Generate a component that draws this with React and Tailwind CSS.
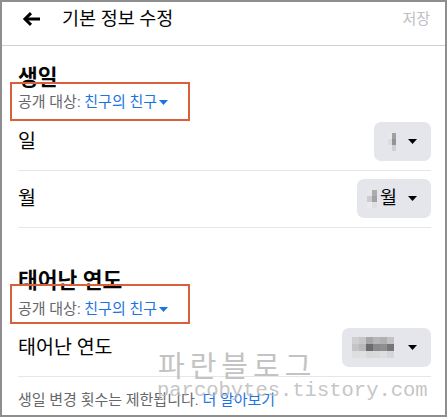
import React from 'react';

const font = { fontFamily: "Roboto, 'Noto Sans CJK KR', sans-serif" };

function Caret({ className = '', w = 9, h = 5 }) {
  return (
    <svg width={w} height={h} viewBox="0 0 10 6" className={className} preserveAspectRatio="none">
      <path d="M0 0h10L5 6z" fill="currentColor" />
    </svg>
  );
}

// 흐리게 처리된 값 (모자이크)
function Mosaic({ cells, cellClass }) {
  return (
    <div className="flex flex-col">
      {cells.map((row, i) => (
        <div key={i} className="flex">
          {row.map((c, j) => (
            <div key={j} className={`${cellClass} ${c}`} />
          ))}
        </div>
      ))}
    </div>
  );
}

const dayCells = [
  ['bg-[#e9e9eb]', 'bg-[#a0a0a2]'],
  ['bg-[#dcdcde]', 'bg-[#939395]'],
  ['bg-[#e6e6e8]', 'bg-[#cfcfd1]'],
];
const monthCells = [
  ['bg-[#e8e8ea]', 'bg-[#acacae]'],
  ['bg-[#cdcdcf]', 'bg-[#a2a2a4]'],
  ['bg-[#eaeaec]', 'bg-[#dedee0]'],
];
const yearCells = [
  ['bg-[#d0d0d2]', 'bg-[#c6c6c8]', 'bg-[#a6a6a8]', 'bg-[#b6b6b8]', 'bg-[#b0b0b2]', 'bg-[#c2c2c4]'],
  ['bg-[#c4c4c6]', 'bg-[#b8b8ba]', 'bg-[#6c6c6e]', 'bg-[#8a8a8c]', 'bg-[#8e8e90]', 'bg-[#767678]'],
  ['bg-[#dedee0]', 'bg-[#e0e0e2]', 'bg-[#d8d8da]', 'bg-[#dadadc]', 'bg-[#dedee0]', 'bg-[#d6d6d8]'],
];

function Privacy({ boxClass, className = '' }) {
  return (
    <div className={`relative flex h-[20px] items-center text-[15px] leading-[20px] ${className}`}>
      <span className="text-[#65676b]">공개 대상:&nbsp;</span>
      <span className="text-[#1b74e4]">친구의 친구</span>
      <Caret className="ml-[2px] text-[#1b74e4]" w={9} h={5} />
      {/* 주석용 빨간 박스 */}
      <div className={`pointer-events-none absolute left-[-8px] w-[180px] border-2 border-[#d9603b] ${boxClass}`} />
    </div>
  );
}

function Row({ label, children }) {
  return (
    <div className="flex items-center justify-between border-b border-[#e4e6eb] pt-[8px] pb-[9px]">
      <span className="text-[19.5px] leading-[24px] text-[#050505]">{label}</span>
      <div className="flex h-[39px] items-center rounded-[7px] bg-[#e4e6eb]">{children}</div>
    </div>
  );
}

export default function App() {
  return (
    <div
      style={font}
      className="relative h-[417px] w-[447px] overflow-hidden border-2 border-[#8e8e8e] bg-white text-[#050505]"
    >
      {/* 헤더 */}
      <div className="h-[44px] border-b border-[#ced0d4]">
        <div className="flex h-[34px] items-center pl-[20px] pr-[15px]">
          <svg width="19" height="14" viewBox="0 0 19 14" className="text-black">
            <path d="M18 7H3" stroke="currentColor" strokeWidth="3" fill="none" />
            <path d="M9 1.2L3 7l6 5.8" stroke="currentColor" strokeWidth="3" fill="none" />
          </svg>
          <span className="ml-[21px] text-[18.5px] leading-[24px]">기본 정보 수정</span>
          <span className="ml-auto text-[15px] text-[#bcc0c4]">저장</span>
        </div>
      </div>

      <div className="pl-4 pr-[14px]">
        {/* 생일 */}
        <div className="mt-[19px] text-[21.5px] font-bold leading-[26px]">생일</div>
        <Privacy className="mt-[1px]" boxClass="top-[-10px] h-[39px]" />
        <div className="mt-[2px]">
          <Row label="일">
            <div className="pl-[14px]">
              <Mosaic cells={dayCells} cellClass="h-[6px] w-[4px]" />
            </div>
            <Caret className="ml-[12px] mr-[14px] text-black" />
          </Row>
          <Row label="월">
            <div className="flex items-center pl-[10px]">
              <Mosaic cells={monthCells} cellClass="h-[6px] w-[5px]" />
              <span className="ml-[3px] text-[18.5px] text-[#050505]">월</span>
            </div>
            <Caret className="ml-[11px] mr-[14px] text-black" />
          </Row>
        </div>

        {/* 태어난 연도 */}
        <div className="mt-[40px] text-[21.5px] font-bold leading-[26px]">태어난 연도</div>
        <Privacy className="mt-[5px]" boxClass="top-[-15px] h-[40px]" />
        <div className="mt-[1px]">
          <Row label="태어난 연도">
            <div className="pl-[10px]">
              <Mosaic cells={yearCells} cellClass="h-[7px] w-[7px]" />
            </div>
            <Caret className="ml-[14px] mr-[14px] text-black" />
          </Row>
        </div>

        <div className="mt-[13px] text-[15px] leading-[20px] text-[#65676b]">
          생일 변경 횟수는 제한됩니다. <span className="text-[#1b74e4]">더 알아보기</span>
        </div>
      </div>

      {/* 워터마크 */}
      <div className="pointer-events-none absolute left-[156px] top-[348px] text-[29px] font-normal leading-[34px] tracking-[5px] text-[#bdbdbd] opacity-90">
        파란블로그
      </div>
      <div
        className="pointer-events-none absolute left-[155px] top-[377px] text-[20.5px] leading-[24px] text-[#b8b8b8] opacity-80"
        style={{ fontFamily: "'Liberation Mono', monospace" }}
      >
        parcobytes.tistory.com
      </div>
    </div>
  );
}
